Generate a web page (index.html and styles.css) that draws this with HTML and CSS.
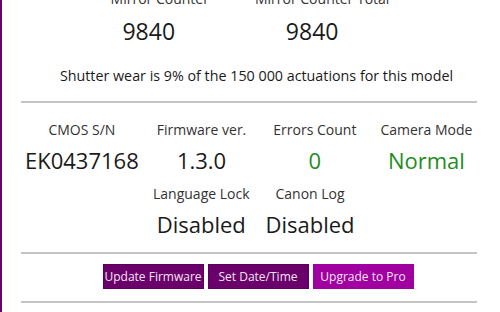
FILE: index.html
```html
<!DOCTYPE html>
<html lang="en">
<head>
    <meta charset="UTF-8">
    <title>Camera Info</title>
    <link rel="stylesheet" href="styles.css">
</head>
<body>

<div class="panel">
    <div class="counters">
        <div class="stat">
            <div class="stat-label">Mirror Counter</div>
            <div class="stat-value">9840</div>
        </div>
        <div class="stat">
            <div class="stat-label">Mirror Counter Total</div>
            <div class="stat-value total">9840</div>
        </div>
    </div>

    <p class="wear">Shutter wear is 9% of the 150 000 actuations for this model</p>

    <hr class="sep-top">

    <div class="info-row first">
        <div class="info item-sn">
            <div class="info-label">CMOS S/N</div>
            <div class="info-value">EK0437168</div>
        </div>
        <div class="info item-fw">
            <div class="info-label">Firmware ver.</div>
            <div class="info-value">1.3.0</div>
        </div>
        <div class="info item-err">
            <div class="info-label">Errors Count</div>
            <div class="info-value ok">0</div>
        </div>
        <div class="info item-mode">
            <div class="info-label">Camera Mode</div>
            <div class="info-value ok">Normal</div>
        </div>
    </div>

    <div class="info-row second">
        <div class="info item-lang">
            <div class="info-label">Language Lock</div>
            <div class="info-value">Disabled</div>
        </div>
        <div class="info item-log">
            <div class="info-label">Canon Log</div>
            <div class="info-value">Disabled</div>
        </div>
    </div>

    <hr class="sep-mid">

    <div class="actions">
        <button class="btn">Update Firmware</button>
        <button class="btn">Set Date/Time</button>
        <button class="btn pro">Upgrade to Pro</button>
    </div>

    <hr>
</div>

</body>
</html>
```

FILE: styles.css
```css
body {
    margin: 0;
    height: 312px;
    overflow: hidden;
    border-left: 2px solid #6a006a; /* window edge */
    background-color: #ffffff;
    font-family: "Open Sans", "Noto Sans", sans-serif;
    color: #1a1a1a;
}

.panel {
    width: 456px;
    margin-left: 19px;
}

/* mirror counters, scrolled partly out of view */
.counters {
    display: flex;
    justify-content: center;
    gap: 46px;
    margin-top: -11px;
    margin-left: 2px;
}

.stat {
    text-align: center;
}

.stat-label {
    font-size: 14px;
    line-height: 20px;
    color: #333;
}

.stat-value {
    font-size: 23px;
    line-height: 32px;
    margin-top: 6px;
    padding-right: 22px;
}

.stat-value.total {
    padding-right: 20px;
}

.wear {
    margin: 19px 0 0;
    padding-left: 15px;
    font-size: 14.3px;
    line-height: 20px;
    text-align: center;
}

hr {
    border: none;
    border-top: 2px solid #c4c4c4;
    margin: 0;
}

.sep-top {
    margin-top: 15px;
}

/* info grid */
.info-row {
    display: flex;
}

.info-row.first {
    margin-top: 17px;
    padding-left: 4px;
}

.info {
    text-align: center;
}

.item-fw {
    margin-left: 18px;
}

.item-err {
    margin-left: 27px;
}

.item-mode {
    margin-left: 24px;
}

.info-label {
    font-size: 14px;
    line-height: 20px;
    color: #333;
}

.info-value {
    font-size: 22px;
    line-height: 30px;
    margin-top: 5px;
}

.info-value.ok {
    color: #1e8c1e;
}

.info-row.second {
    margin-top: 9px;
    padding-left: 132px;
}

.item-log {
    margin-left: 16px;
}

.sep-mid {
    margin-top: 13px;
}

.actions {
    display: flex;
    justify-content: center;
    gap: 4px;
    padding: 10px 0 12px 18px;
}

.btn {
    width: 101px;
    height: 25px;
    border: 1px solid #5a005a;
    background-color: #6a006a;
    color: #f3e6f3;
    font-family: inherit;
    font-size: 12px;
    padding: 0;
    cursor: pointer;
}

.btn.pro {
    background-color: #a000a0;
    border-color: #a000a0;
}
```
